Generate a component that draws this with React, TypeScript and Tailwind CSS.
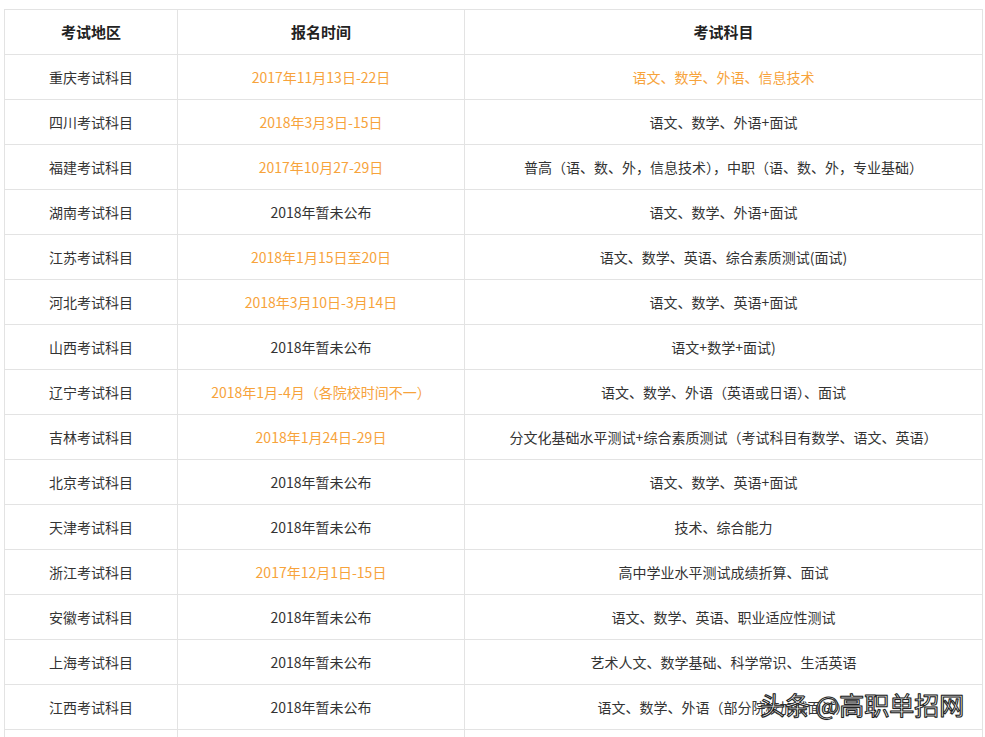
import React from "react";

const rows: [string, string, boolean, string, boolean][] = [
  ["重庆考试科目", "2017年11月13日-22日", true, "语文、数学、外语、信息技术", true],
  ["四川考试科目", "2018年3月3日-15日", true, "语文、数学、外语+面试", false],
  ["福建考试科目", "2017年10月27-29日", true, "普高（语、数、外，信息技术），中职（语、数、外，专业基础）", false],
  ["湖南考试科目", "2018年暂未公布", false, "语文、数学、外语+面试", false],
  ["江苏考试科目", "2018年1月15日至20日", true, "语文、数学、英语、综合素质测试(面试)", false],
  ["河北考试科目", "2018年3月10日-3月14日", true, "语文、数学、英语+面试", false],
  ["山西考试科目", "2018年暂未公布", false, "语文+数学+面试)", false],
  ["辽宁考试科目", "2018年1月-4月（各院校时间不一）", true, "语文、数学、外语（英语或日语）、面试", false],
  ["吉林考试科目", "2018年1月24日-29日", true, "分文化基础水平测试+综合素质测试（考试科目有数学、语文、英语）", false],
  ["北京考试科目", "2018年暂未公布", false, "语文、数学、英语+面试", false],
  ["天津考试科目", "2018年暂未公布", false, "技术、综合能力", false],
  ["浙江考试科目", "2017年12月1日-15日", true, "高中学业水平测试成绩折算、面试", false],
  ["安徽考试科目", "2018年暂未公布", false, "语文、数学、英语、职业适应性测试", false],
  ["上海考试科目", "2018年暂未公布", false, "艺术人文、数学基础、科学常识、生活英语", false],
  ["江西考试科目", "2018年暂未公布", false, "语文、数学、外语（部分院校加试面试）", false],
];

const font = { fontFamily: '"Microsoft YaHei","Noto Sans CJK SC",sans-serif' };

export default function App() {
  return (
    <div className="relative w-[985px] h-[737px] overflow-hidden bg-white" style={font}>
      <div className="pt-[9px] pl-[4px] w-[983px]">
        <div className="grid grid-cols-[173px_287px_518px] border-t border-l border-[#e3e3e3] text-[14px] text-[#333]">
          {["考试地区", "报名时间", "考试科目"].map((h) => (
            <div key={h} className="h-[45px] flex items-center justify-center border-r border-b border-[#e3e3e3] font-bold text-[15px] text-[#222]">{h}</div>
          ))}
          {rows.map((r) => (
            <React.Fragment key={r[0]}>
              <div className="h-[45px] flex items-center justify-center border-r border-b border-[#e3e3e3]">{r[0]}</div>
              <div className={`h-[45px] flex items-center justify-center border-r border-b border-[#e3e3e3] ${r[2] ? "text-[#f7a33b]" : ""}`}>{r[1]}</div>
              <div className={`h-[45px] flex items-center justify-center border-r border-b border-[#e3e3e3] whitespace-nowrap ${r[4] ? "text-[#f7a33b]" : ""}`}>{r[3]}</div>
            </React.Fragment>
          ))}
          <div className="h-[45px] border-r border-[#e3e3e3]" />
          <div className="h-[45px] border-r border-[#e3e3e3]" />
          <div className="h-[45px] border-r border-[#e3e3e3]" />
        </div>
      </div>
      <div
        className="absolute left-[760px] top-[686px] text-[25px] text-white"
        style={{ ...font, WebkitTextStroke: "1px #222", textShadow: "0 0 1px #000" }}
      >
        头条 @高职单招网
      </div>
    </div>
  );
}
